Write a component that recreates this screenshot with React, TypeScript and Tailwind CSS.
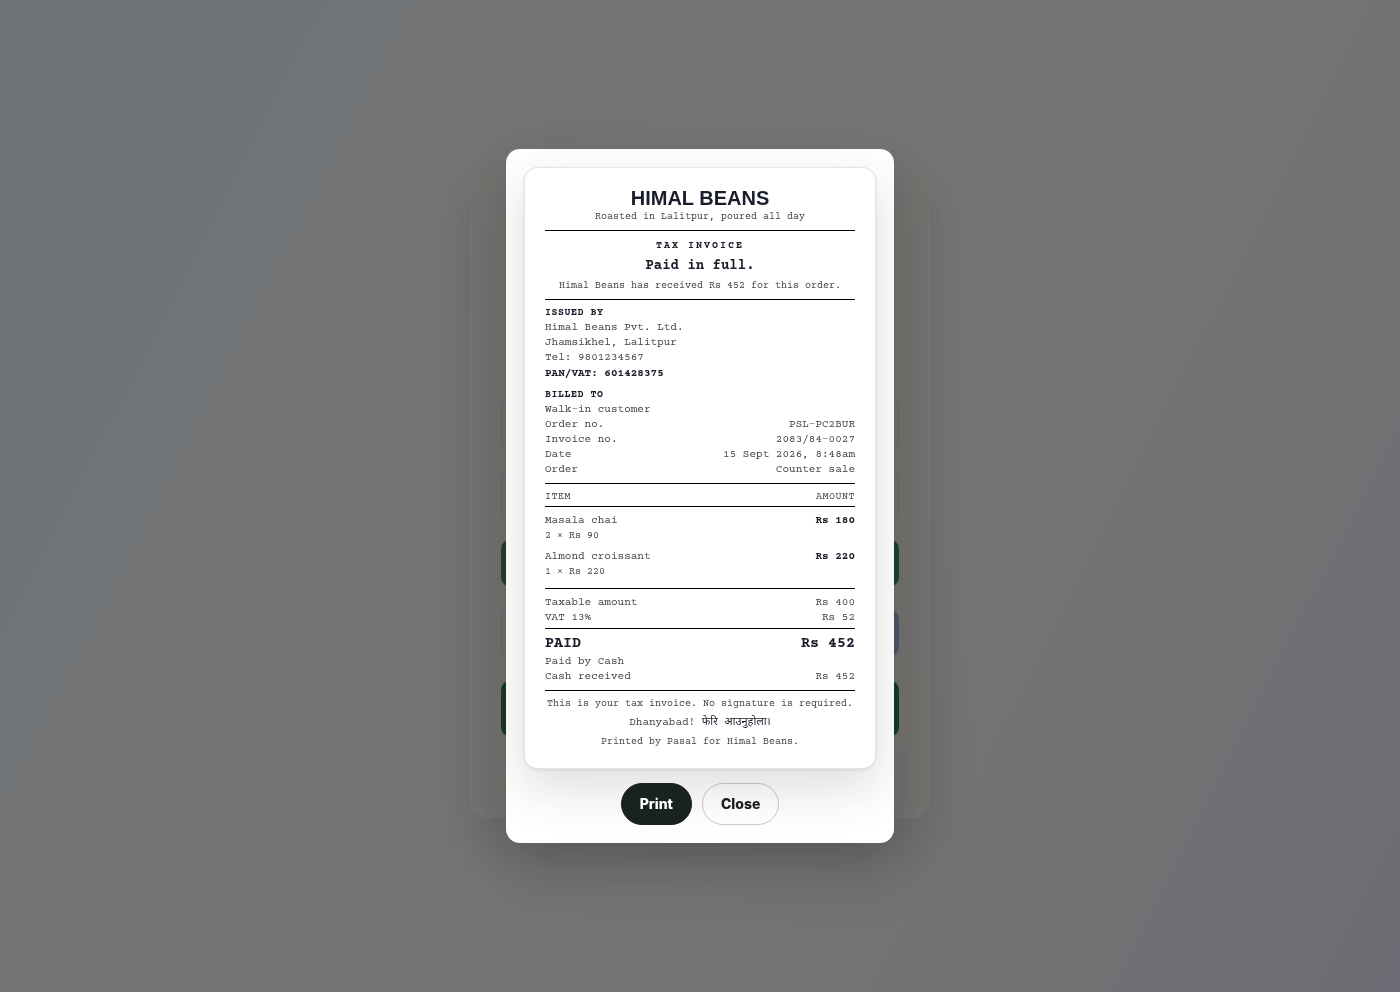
import React, { useState } from 'react';

interface ReceiptItem {
    name: string;
    qty: number;
    price: number;
}

const meta = [
    { label: 'Order no.', value: 'PSL-PC2BUR' },
    { label: 'Invoice no.', value: '2083/84-0027' },
    { label: 'Date', value: '15 Sept 2026, 8:48am' },
    { label: 'Order', value: 'Counter sale' },
];

const items: ReceiptItem[] = [
    { name: 'Masala chai', qty: 2, price: 90 },
    { name: 'Almond croissant', qty: 1, price: 220 },
];

const Row: React.FC<{ label: string; value?: string }> = ({ label, value }) => (
    <div className="flex justify-between">
        <dt>{label}</dt>
        {value && <dd className="text-right">{value}</dd>}
    </div>
);

// Checkout panel that stays dimmed under the dialog
const CheckoutPanel: React.FC = () => (
    <div aria-hidden="true" className="w-full max-w-[460px] h-[644px] rounded-[20px] border border-white/30 bg-[#efece6]/90 px-[30px] pb-20 flex flex-col justify-end shadow-[0_20px_50px_rgba(30,30,30,0.1)]">
        <div className="h-[50px] mb-[21px] rounded-[10px] border border-black/10" />
        <div className="h-12 mb-[22px] rounded-[10px] border border-black/10" />
        <div className="h-12 mb-[22px] rounded-[10px] bg-[#2f8257]" />
        <div className="h-12 mb-[23px] flex gap-2">
            <div className="flex-1 rounded-[10px] border border-black/10" />
            <div className="flex-1 rounded-[10px] bg-[#9aacd8]" />
        </div>
        <div className="h-[57px] rounded-[10px] bg-[#22704c]" />
    </div>
);

const Receipt: React.FC = () => (
    <article className="rounded-[14px] border border-black/10 bg-white px-5 pt-5 pb-[19px] font-['Courier_Prime','Liberation_Mono','Noto_Sans',monospace] text-[11px] leading-[15px] text-[#43464a] shadow-[0_1px_3px_rgba(40,35,20,0.1),0_18px_50px_rgba(60,50,40,0.17)]">
        <header className="border-b border-black pb-1 text-center">
            <h1 className="font-['Liberation_Sans',sans-serif] text-xl leading-5 font-bold text-[#1a1d2b]">HIMAL BEANS</h1>
            <p className="text-[10px] leading-[18px]">Roasted in Lalitpur, poured all day</p>
        </header>

        <section className="border-b border-black pt-[7px] pb-[5px] text-center">
            <p className="text-[10px] leading-4 font-bold tracking-[2px] text-[#1a1d2b]">TAX INVOICE</p>
            <h2 id="receipt-title" className="text-sm leading-6 font-bold text-[#1a1d2b]">Paid in full.</h2>
            <p className="text-[10px] leading-4">Himal Beans has received Rs 452 for this order.</p>
        </section>

        <section className="py-1.5">
            <h3 className="text-[10px] leading-[14px] font-bold tracking-wider text-[#1a1d2b]">ISSUED BY</h3>
            <p>Himal Beans Pvt. Ltd.</p>
            <p>Jhamsikhel, Lalitpur</p>
            <p>Tel: 9801234567</p>
            <p className="leading-[17px] font-bold text-[#1a1d2b]">PAN/VAT: 601428375</p>
            <h3 className="mt-1.5 text-[10px] leading-[14px] font-bold tracking-wider text-[#1a1d2b]">BILLED TO</h3>
            <p>Walk-in customer</p>
            <dl>
                {meta.map(m => (
                    <Row key={m.label} label={m.label} value={m.value} />
                ))}
            </dl>
        </section>

        <div className="border-b border-black pb-[9px]">
            <table className="w-full border-separate border-spacing-0">
                <thead>
                    <tr className="text-[10px] leading-[14px] tracking-wider">
                        <th scope="col" className="border-y border-black pt-1.5 pb-0.5 text-left font-normal">ITEM</th>
                        <th scope="col" className="border-y border-black pt-1.5 pb-0.5 text-right font-normal">AMOUNT</th>
                    </tr>
                </thead>
                <tbody>
                    {items.map(item => (
                        <tr key={item.name} className="align-top">
                            <td className="pt-1.5">
                                {item.name}
                                <span className="block text-[10px]">{item.qty} × Rs {item.price}</span>
                            </td>
                            <td className="pt-1.5 text-right font-bold text-[#1a1d2b]">Rs {item.qty * item.price}</td>
                        </tr>
                    ))}
                </tbody>
            </table>
        </div>

        <dl className="border-b border-black pt-1.5 pb-[3px]">
            <Row label="Taxable amount" value="Rs 400" />
            <Row label="VAT 13%" value="Rs 52" />
        </dl>

        <dl className="border-b border-black pt-[5px] pb-1.5">
            <div className="flex justify-between text-[15px] leading-5 font-bold text-[#1a1d2b]">
                <dt>PAID</dt>
                <dd>Rs 452</dd>
            </div>
            <Row label="Paid by Cash" />
            <Row label="Cash received" value="Rs 452" />
        </dl>

        <footer className="flex flex-col gap-[3px] pt-1.5 text-center text-[10px] leading-[14px]">
            <p>This is your tax invoice. No signature is required.</p>
            <p className="h-[18px] text-[11px] leading-[18px]">
                Dhanyabad! <span lang="ne" className="text-[#1a1d2b]">फेरि आउनुहोला।</span>
            </p>
            <p>Printed by Pasal for Himal Beans.</p>
        </footer>
    </article>
);

const App: React.FC = () => {
    const [open, setOpen] = useState(true);

    return (
        <div className="min-h-screen flex items-center justify-center bg-[linear-gradient(117deg,#dfe9f3_0%,#e8eef1_22%,#efefee_48%,#eeeded_66%,#e8e4ea_84%,#dfdcef_100%)]">
            <CheckoutPanel />

            {open && (
                <div className="fixed inset-0 flex items-center justify-center bg-[#101011]/55 p-4">
                    <div
                        role="dialog"
                        aria-modal="true"
                        aria-labelledby="receipt-title"
                        className="w-full max-w-[388px] overflow-hidden rounded-[14px] bg-white p-[18px] shadow-[0_24px_60px_rgba(0,0,0,0.22)]"
                    >
                        <Receipt />
                        <div className="mt-3.5 flex justify-center gap-2.5 font-['Inter',sans-serif] text-sm font-extrabold">
                            <button
                                type="button"
                                onClick={() => window.print()}
                                className="h-[42px] rounded-full border border-[#18231f] bg-[#18231f] px-[18px] text-white"
                            >
                                Print
                            </button>
                            <button
                                type="button"
                                onClick={() => setOpen(false)}
                                className="h-[42px] rounded-full border border-black/20 px-[18px] text-[#1b1d1c]"
                            >
                                Close
                            </button>
                        </div>
                    </div>
                </div>
            )}
        </div>
    );
};

export default App;
